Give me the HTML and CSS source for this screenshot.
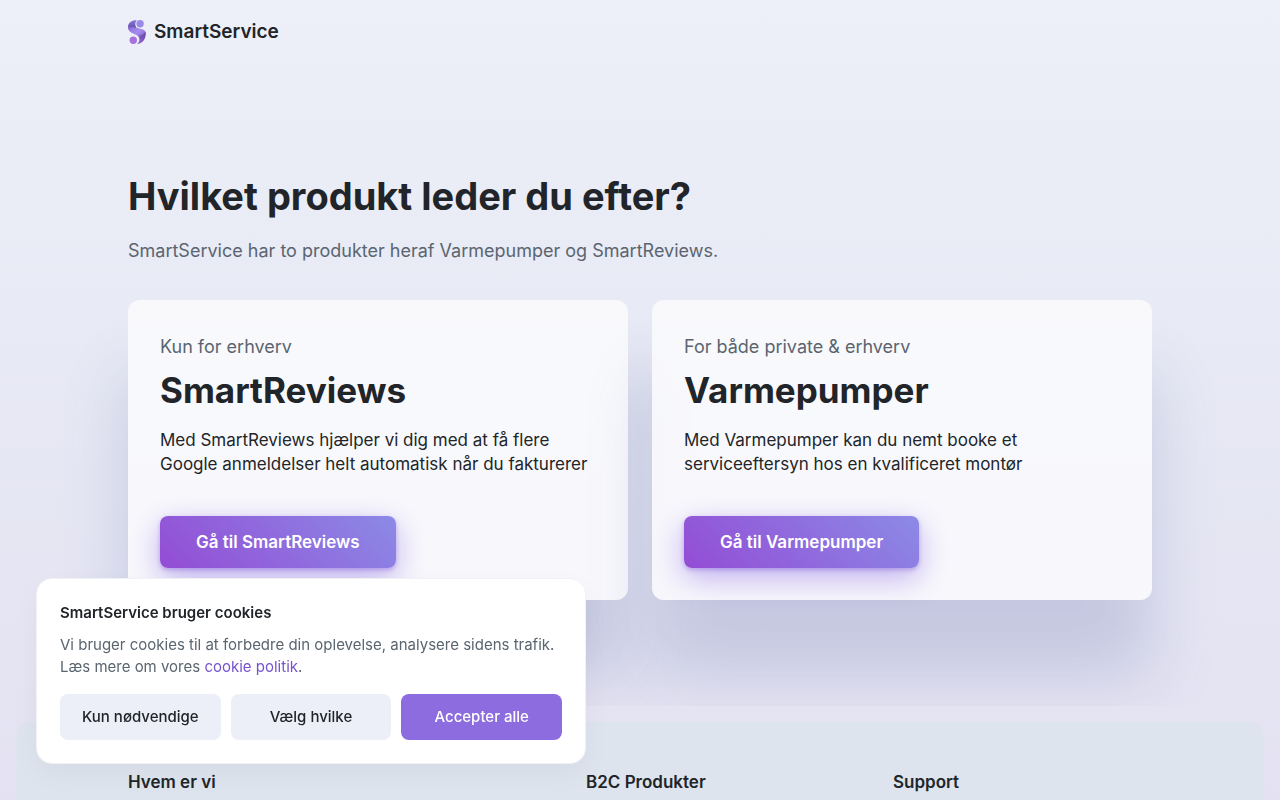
FILE: index.html
```html
<!DOCTYPE html>
<html lang="da">
<head>
<meta charset="utf-8">
<meta name="viewport" content="width=device-width, initial-scale=1">
<title>SmartService</title>
<link rel="stylesheet" href="styles.css">
</head>
<body>
<div class="page">
  <header class="header container">
    <a class="brand" href="#">
      <svg class="brand-mark" viewBox="0 0 18 24" aria-hidden="true">
        <defs>
          <linearGradient id="top" x1="0" y1="0" x2="0" y2="1"><stop offset="0" stop-color="#8b78dc"/><stop offset="1" stop-color="#5d479f"/></linearGradient>
          <linearGradient id="band" x1="0" y1="0" x2="1" y2="1"><stop offset="0" stop-color="#8a65d2"/><stop offset=".5" stop-color="#a68df0"/><stop offset="1" stop-color="#7554bd"/></linearGradient>
          <linearGradient id="low" x1="1" y1="0" x2="0" y2="1"><stop offset="0" stop-color="#5d4398"/><stop offset="1" stop-color="#9b6be2"/></linearGradient>
        </defs>
        <path d="M9 0C3.500 0 0 3 0 7c0 1 .2 1.800.6 2.500C3 7.500 6 7.500 9.300 8.500 7 6.500 6.500 2.500 9 0Z" fill="url(#top)"/>
        <path d="M.2 6C-.5 10 2 12.300 6 14c4 1.500 5 2.500 5.500 5.500 3.500-.5 6.500-4 6-7.500C16.500 9 13 9 9.500 8 6 7.300 2.500 8.300.2 6Z" fill="url(#band)"/>
        <path d="M17.500 11.500c1 6-2 12-8.500 12.500 2.500-2 3.500-6 1.500-8.500 3 .5 5.500-1 7-4Z" fill="url(#low)"/>
        <circle cx="12.100" cy="3.700" r="3.700" fill="#998be8"/>
        <circle cx="5.300" cy="20.300" r="3.700" fill="#a673de"/>
      </svg>
      <span>SmartService</span>
    </a>
  </header>
  <main class="main">
    <div class="container">
      <h1 class="title">Hvilket produkt leder du efter?</h1>
      <p class="lead">SmartService har to produkter heraf Varmepumper og SmartReviews.</p>
      <div class="cards">
        <article class="card">
          <p class="card-kicker">Kun for erhverv</p>
          <h2 class="card-title">SmartReviews</h2>
          <p class="card-text">Med SmartReviews hjælper vi dig med at få flere Google anmeldelser helt automatisk når du fakturerer</p>
          <a class="cta" href="#">Gå til SmartReviews</a>
        </article>
        <article class="card">
          <p class="card-kicker">For både private &amp; erhverv</p>
          <h2 class="card-title">Varmepumper</h2>
          <p class="card-text">Med Varmepumper kan du nemt booke et serviceeftersyn hos en kvalificeret montør</p>
          <a class="cta" href="#">Gå til Varmepumper</a>
        </article>
      </div>
    </div>
  </main>
  <footer class="footer">
    <div class="footer-grid">
      <h3 class="footer-title">Hvem er vi</h3>
      <h3 class="footer-title">B2C Produkter</h3>
      <h3 class="footer-title">Support</h3>
    </div>
  </footer>
</div>
<section class="cookies" role="dialog" aria-labelledby="cookies-title">
  <h2 class="cookies-title" id="cookies-title">SmartService bruger cookies</h2>
  <p class="cookies-text">Vi bruger cookies til at forbedre din oplevelse, analysere sidens trafik. Læs mere om vores <a class="cookies-link" href="#">cookie politik</a>.</p>
  <div class="cookies-actions">
    <button class="btn" type="button">Kun nødvendige</button>
    <button class="btn" type="button">Vælg hvilke</button>
    <button class="btn btn-primary" type="button">Accepter alle</button>
  </div>
</section>
</body>
</html>
```
FILE: styles.css
```css
* { box-sizing: border-box; }
body {
  margin: 0;
  font-family: Inter, "Liberation Sans", sans-serif;
  font-size: 17px;
  line-height: 24px;
  color: #212529;
}
h1, h2, h3, p { margin: 0; }
a { color: inherit; text-decoration: none; }
.page {
  min-height: 100vh;
  background: linear-gradient(180deg, #edf0f8 0, #e8eaf5 300px, #e4e2f2 800px);
}
.container {
  width: 80%;
  margin: 0 auto;
}
.header { padding: 20px 0; }
.brand {
  display: inline-flex;
  align-items: center;
  gap: 8px;
  font-size: 19px;
  font-weight: 600;
  vertical-align: top;
}
.brand-mark { width: 18px; height: 24px; }
.main {
  padding: 108px 0 106px;
  overflow: hidden;
}
.title {
  font-size: 38px;
  line-height: 48px;
  font-weight: 700;
}
.lead {
  margin-top: 16px;
  font-size: 18px;
  line-height: 30px;
  color: #5a6570;
}
.cards {
  display: grid;
  grid-template-columns: 1fr 1fr;
  gap: 24px;
  margin-top: 34px;
}
.card {
  padding: 32px;
  border-radius: 12px;
  background: rgba(255, 255, 255, .72);
  box-shadow: 0 75px 65px rgba(80, 100, 160, .22);
}
.card-kicker {
  font-size: 18px;
  line-height: 30px;
  color: #5a6570;
}
.card-title {
  margin-top: 6px;
  font-size: 35px;
  line-height: 44px;
  font-weight: 700;
}
.card-text { margin-top: 16px; }
.cta {
  display: inline-block;
  margin-top: 40px;
  padding: 14px 36px;
  border-radius: 8px;
  font-weight: 600;
  color: #fff;
  vertical-align: top;
  background: linear-gradient(45deg, #934cd5, #8c8ae6);
  box-shadow: 0 2px 4px rgba(126, 87, 214, .4), 0 10px 30px rgba(126, 87, 224, .46);
}
.footer {
  margin: 16px 16px 0;
  padding: 48px calc(10vw - 16px) 40px;
  border-radius: 16px 16px 0 0;
  background: #dde4ed;
}
.footer-grid {
  display: grid;
  grid-template-columns: 19fr 12fr 12fr;
  gap: 48px;
}
.footer-title {
  font-size: 17px;
  line-height: 24px;
  font-weight: 600;
}
.cookies {
  position: fixed;
  left: 36px;
  bottom: 36px;
  width: 550px;
  max-width: calc(100% - 72px);
  padding: 23px;
  border: 1px solid #f0f1f4;
  border-radius: 16px;
  background: #fff;
  font-size: 15px;
  line-height: 22px;
  box-shadow: 0 10px 29px rgba(2, 2, 40, .04);
}
.cookies-title {
  font-size: 15px;
  line-height: 22px;
  font-weight: 600;
}
.cookies-text {
  margin-top: 10px;
  color: #5a6570;
}
.cookies-link { color: #7653ce; }
.cookies-actions {
  display: grid;
  grid-template-columns: repeat(3, 1fr);
  gap: 10px;
  margin-top: 16px;
}
.btn {
  height: 46px;
  padding: 0 8px;
  border: 0;
  border-radius: 8px;
  font: inherit;
  font-weight: 500;
  color: #212529;
  background: #eceff8;
  cursor: pointer;
}
.btn-primary {
  color: #fff;
  background: #8c6cdf;
}
```
